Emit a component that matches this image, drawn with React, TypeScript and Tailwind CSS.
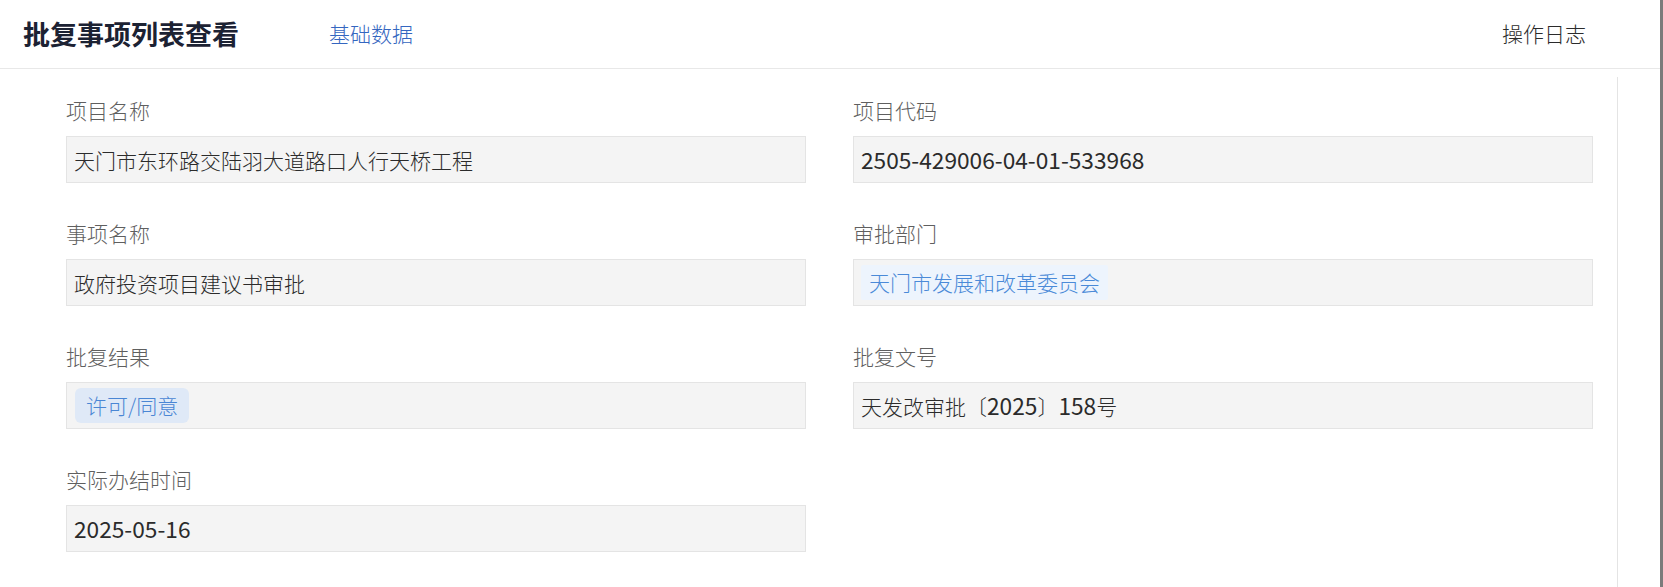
import React from "react";

type Field = {
  label: string;
  value: string;
  tag?: "dept" | "result";
};

const fields: (Field | null)[] = [
  { label: "项目名称", value: "天门市东环路交陆羽大道路口人行天桥工程" },
  { label: "项目代码", value: "2505-429006-04-01-533968" },
  { label: "事项名称", value: "政府投资项目建议书审批" },
  { label: "审批部门", value: "天门市发展和改革委员会", tag: "dept" },
  { label: "批复结果", value: "许可/同意", tag: "result" },
  { label: "批复文号", value: "天发改审批〔2025〕158号" },
  { label: "实际办结时间", value: "2025-05-16" },
  null,
];

// latin runs are set a bit larger, like the latin glyphs of the original font
const Mixed = ({ text }: { text: string }) => {
  const parts = text.match(/[\x20-\x7e]+|[^\x20-\x7e]+/g) || [];
  return (
    <>
      {parts.map((p, i) =>
        /^[\x20-\x7e]+$/.test(p) ? (
          <span key={i} className="text-[22.7px] font-normal">
            {p}
          </span>
        ) : (
          <span key={i}>{p}</span>
        )
      )}
    </>
  );
};

const FieldBox = ({ field }: { field: Field }) => {
  return (
    <div className="mb-[35px]">
      <div className="h-[30px] leading-[30px] text-[21px] font-light text-[#5f5f5f]">
        {field.label}
      </div>
      <div className="mt-[11px] h-[47px] border border-[#e4e4e4] bg-[#f4f4f4] flex items-center px-[7px]">
        {field.tag === "dept" ? (
          <span className="h-[35px] leading-[35px] px-[8px] bg-[#edf4fd] text-[#4a8ad8] text-[21px] font-light rounded-[2px]">
            {field.value}
          </span>
        ) : field.tag === "result" ? (
          <span className="ml-[1px] h-[35px] leading-[35px] px-[11px] bg-[#dfe9f7] text-[#4a86d4] text-[21px] font-light rounded-[6px]">
            {field.value}
          </span>
        ) : (
          <span className="text-[21px] leading-[30px] font-light text-[#2b2b2b]">
            <Mixed text={field.value} />
          </span>
        )}
      </div>
    </div>
  );
};

const App = () => {
  return (
    <div
      className="flex h-[587px] w-full bg-white overflow-hidden"
      style={{ fontFamily: '"Microsoft YaHei", "Noto Sans CJK SC", sans-serif' }}
    >
      <div className="flex-1 flex flex-col">
        <header className="h-[69px] border-b border-[#e8e8e8] flex items-center pl-[23px] pr-[74px]">
          <h1 className="text-[27px] font-bold text-[#1c2233]">批复事项列表查看</h1>
          <a className="ml-[90px] text-[21px] font-light text-[#3466c0]" href="#">
            基础数据
          </a>
          <div className="ml-auto text-[21px] font-light text-[#2b2b2b]">操作日志</div>
        </header>
        <div className="flex flex-1">
          <div className="flex-1 pl-[66px] pr-[24px] pt-[26px]">
            <div className="grid grid-cols-2 gap-x-[47px]">
              {fields.map((f, i) =>
                f ? <FieldBox key={i} field={f} /> : <div key={i} />
              )}
            </div>
          </div>
          <div className="w-px bg-[#e4e4e4] mt-[8px]" />
          <div className="w-[42px]" />
        </div>
      </div>
      <div className="w-[3px] bg-[#7b7b7b]" />
    </div>
  );
};

export default App;
